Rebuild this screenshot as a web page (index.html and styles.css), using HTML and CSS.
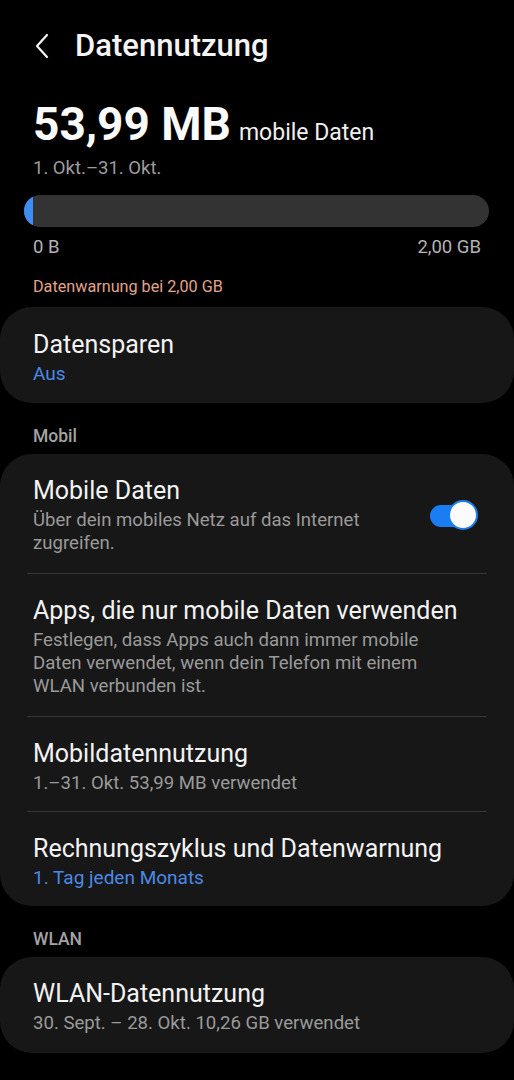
FILE: index.html
```html
<!DOCTYPE html>
<html lang="de">
<head>
<meta charset="utf-8">
<title>Datennutzung</title>
<link rel="stylesheet" href="styles.css">
</head>
<body>
<div class="page">
  <header class="topbar">
    <svg class="back" width="16" height="26" viewBox="0 0 16 26"><path d="M13 2 L3 13 L13 24" fill="none" stroke="#f2f2f2" stroke-width="2.2" stroke-linecap="round" stroke-linejoin="round"/></svg>
    <h1 class="title">Datennutzung</h1>
  </header>

  <section class="summary">
    <div class="amount"><span class="big">53,99 MB</span><span class="unit">mobile Daten</span></div>
    <div class="period">1. Okt.–31. Okt.</div>
    <div class="bar"><div class="fill" style="width:9px"></div></div>
    <div class="scale"><span>0 B</span><span>2,00 GB</span></div>
    <div class="warning">Datenwarnung bei 2,00 GB</div>
  </section>

  <div class="card card-single">
    <div class="item">
      <div class="item-title">Datensparen</div>
      <div class="item-blue">Aus</div>
    </div>
  </div>

  <div class="section-label">Mobil</div>
  <div class="card">
    <div class="item item-toggle">
      <div class="item-text">
        <div class="item-title">Mobile Daten</div>
        <div class="item-sub">Über dein mobiles Netz auf das Internet<br>zugreifen.</div>
      </div>
      <div class="switch"><div class="knob"></div></div>
    </div>
    <div class="divider"></div>
    <div class="item">
      <div class="item-title">Apps, die nur mobile Daten verwenden</div>
      <div class="item-sub">Festlegen, dass Apps auch dann immer mobile<br>Daten verwendet, wenn dein Telefon mit einem<br>WLAN verbunden ist.</div>
    </div>
    <div class="divider"></div>
    <div class="item item-short">
      <div class="item-title">Mobildatennutzung</div>
      <div class="item-sub">1.–31. Okt. 53,99 MB verwendet</div>
    </div>
    <div class="divider"></div>
    <div class="item item-short">
      <div class="item-title">Rechnungszyklus und Datenwarnung</div>
      <div class="item-blue">1. Tag jeden Monats</div>
    </div>
  </div>

  <div class="section-label">WLAN</div>
  <div class="card">
    <div class="item">
      <div class="item-title">WLAN-Datennutzung</div>
      <div class="item-sub">30. Sept. – 28. Okt. 10,26 GB verwendet</div>
    </div>
  </div>
</div>
</body>
</html>
```

FILE: styles.css
```css
html, body {
  margin: 0;
  padding: 0;
  background: #000;
}
body {
  font-family: Roboto, "Liberation Sans", sans-serif;
  color: #f2f2f2;
  width: 514px;
  height: 1080px;
  overflow: hidden;
}
.page {
  display: flex;
  flex-direction: column;
}
.topbar {
  display: flex;
  align-items: center;
  padding: 26px 0 0 34px;
  height: 40px;
}
.back {
  display: block;
  margin-right: 25px;
}
.title {
  margin: 0;
  font-size: 31px;
  font-weight: 500;
  line-height: 40px;
  color: #f4f4f4;
}
.summary {
  display: flex;
  flex-direction: column;
  padding: 0 33px 0 24px;
  margin-top: 31px;
}
.amount {
  padding-left: 9px;
  line-height: 54px;
  height: 54px;
  display: flex;
  align-items: baseline;
  gap: 8px;
}
.big {
  font-size: 46px;
  font-weight: 700;
  color: #fafafa;
}
.unit {
  font-size: 23px;
  color: #f0f0f0;
}
.period {
  padding-left: 9px;
  margin-top: 6px;
  font-size: 18.5px;
  line-height: 22px;
  color: #9d9d9d;
}
.bar {
  margin-top: 16px;
  height: 32px;
  border-radius: 16px;
  background: #333333;
  overflow: hidden;
  margin-right: -8px;
}
.fill {
  height: 100%;
  background: #3e8df2;
}
.scale {
  display: flex;
  justify-content: space-between;
  margin-top: 9px;
  padding-left: 9px;
  font-size: 18.5px;
  line-height: 22px;
  color: #b4b4b4;
}
.warning {
  padding-left: 9px;
  margin-top: 19px;
  font-size: 16.2px;
  line-height: 20px;
  color: #e2a48b;
}
.card {
  background: #171717;
  border-radius: 32px;
  display: flex;
  flex-direction: column;
}
.card-single {
  margin-top: 10px;
}
.item {
  padding: 22px 33px 18px 33px;
  display: flex;
  flex-direction: column;
}
.item-short {
  padding-bottom: 16px;
}
.card-single .item {
  padding: 23px 33px 17px 33px;
}
.item-title {
  font-size: 25px;
  line-height: 30px;
  color: #f2f2f2;
}
.item-sub {
  margin-top: 3px;
  font-size: 18.6px;
  line-height: 23px;
  color: #9a9a9a;
}
.item-blue {
  margin-top: 2px;
  font-size: 19px;
  line-height: 24px;
  color: #4a8ae6;
}
.item-toggle {
  flex-direction: row;
  align-items: center;
  justify-content: space-between;
  padding-right: 38px;
}
.switch {
  position: relative;
  width: 46px;
  height: 22px;
  border-radius: 11px;
  background: #1a7ef2;
}
.knob {
  position: absolute;
  right: -1px;
  top: -4px;
  width: 26px;
  height: 26px;
  border-radius: 50%;
  background: #fbfbfb;
  border: 2px solid #1a7ef2;
  box-sizing: content-box;
  margin: -1px;
}
.divider {
  height: 1px;
  background: #363636;
  margin: 0 27px;
}
.section-label {
  margin-top: 23px;
  margin-bottom: 8px;
  padding-left: 33px;
  font-size: 17.5px;
  font-weight: 500;
  line-height: 20px;
  color: #a3a3a3;
}
```
